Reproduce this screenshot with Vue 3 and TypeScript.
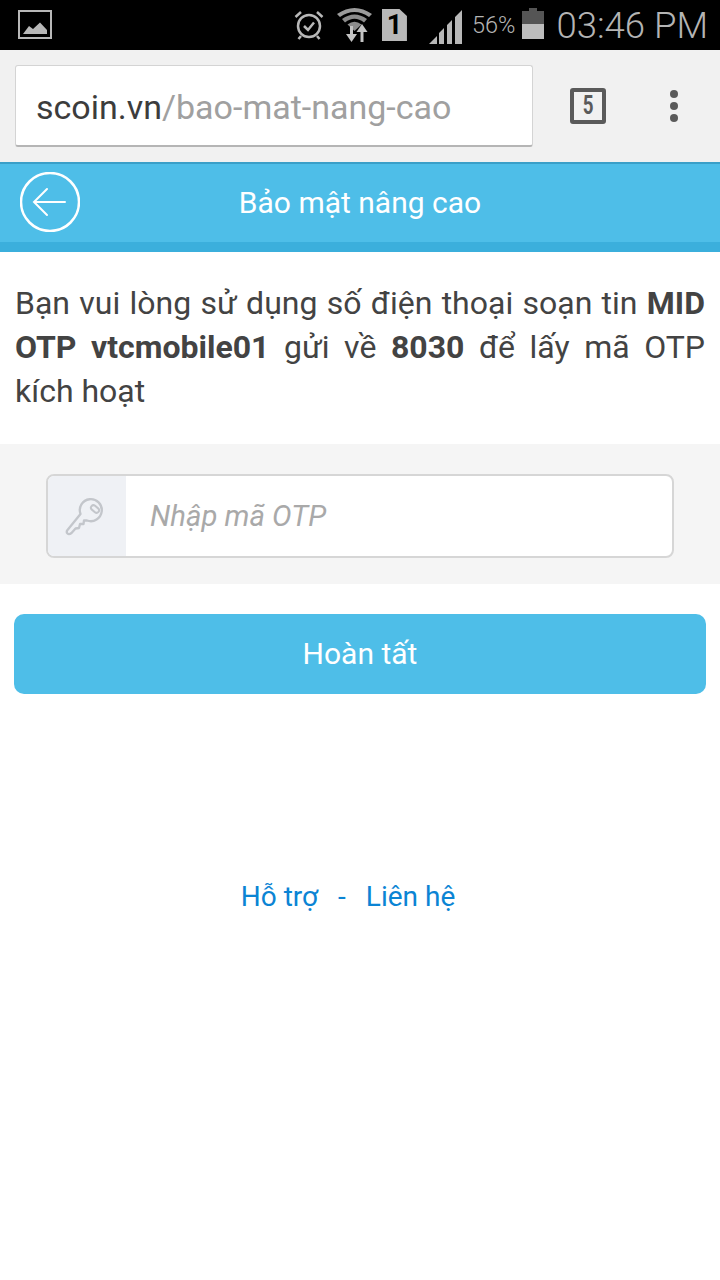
<script setup lang="ts">
import { ref } from 'vue'

const otp = ref('')
</script>

<template>
  <div class="screen">
    <!-- status bar -->
    <div class="status-bar">
      <svg class="pic-icon" width="34" height="29" viewBox="0 0 34 29">
        <rect x="1" y="1" width="32" height="27" fill="none" stroke="#b8b8b8" stroke-width="2" />
        <path d="M5 24 L11 16 L15 19 L22 12.500 L29 20 L29 24 Z" fill="#b8b8b8" />
      </svg>
      <div class="spacer"></div>
      <svg class="alarm" width="30" height="30" viewBox="0 0 30 30">
        <circle cx="15" cy="16" r="11" fill="none" stroke="#b8b8b8" stroke-width="2.500" />
        <path d="M10 16 L14 20 L20 12.500" fill="none" stroke="#b8b8b8" stroke-width="2.500" />
        <path d="M1.500 7 L7 2 M28.500 7 L23 2 M7 26 L4.500 29 M23 26 L25.500 29" stroke="#b8b8b8" stroke-width="2.500" />
      </svg>
      <svg class="wifi" width="36" height="36" viewBox="0 0 36 36">
        <path d="M0 7 Q17.500 -5 35 7 L32 10 Q17.500 0 3 10 Z" fill="#9c9c9c" />
        <path d="M5 12 Q17.500 3 30 12 L27 15.500 Q17.500 8 8 15.500 Z" fill="#8c8c8c" />
        <path d="M10.500 17.500 Q17.500 12 24.500 17.500 L17.500 24 Z" fill="#8c8c8c" />
        <path d="M13 19 H16 V27 H20 L14.500 35 L9 27 H13 Z" fill="#c4c4c4" />
        <path d="M23.500 35 H26.500 V25 H30.500 L25 17 L19.500 25 H23.500 Z" fill="#c4c4c4" />
      </svg>
      <div class="sim">1</div>
      <svg class="signal" width="34" height="34" viewBox="0 0 34 34">
        <path d="M0 34 L8 26 V34 Z M10 34 V23 L15 18 V34 Z M18 34 V15 L23 10 V34 Z M26 34 V7 L33 0 V34 Z" fill="#b8b8b8" />
      </svg>
      <span class="pct">56%</span>
      <div class="battery"><div class="battery-fill"></div></div>
      <span class="clock">03:46 PM</span>
    </div>

    <!-- browser toolbar -->
    <div class="toolbar">
      <div class="url-box">
        <span class="url-host">scoin.vn</span><span class="url-path">/bao-mat-nang-cao</span>
      </div>
      <div class="tabs-count"><span>5</span></div>
      <div class="menu-dots"><i></i><i></i><i></i></div>
    </div>

    <!-- page header -->
    <header class="page-header">
      <a class="back-btn">
        <svg width="60" height="60" viewBox="0 0 60 60">
          <circle cx="30" cy="30" r="29" fill="none" stroke="#fff" stroke-width="2.500" />
          <path d="M14 30 H45 M27 17 L14 30 L27 43" fill="none" stroke="#fff" stroke-width="2" stroke-linecap="round" />
        </svg>
      </a>
      <h1 class="page-title">Bảo mật nâng cao</h1>
    </header>

    <p class="intro">
      Bạn vui lòng sử dụng số điện thoại soạn tin <b>MID OTP vtcmobile01</b> gửi về <b>8030</b> để lấy mã OTP kích hoạt
    </p>

    <div class="otp-section">
      <div class="otp-field">
        <div class="otp-icon">
          <svg width="40" height="40" viewBox="0 0 40 40">
            <path d="M15.500 18 A11 11 0 1 1 22 24.500 L19 24.500 L18.500 28 L15 28 L14 32 L10.500 32.500 L6.500 37 Q4 39 2.500 37.500 Q1 36 2.500 34 Z" fill="none" stroke="#c3c6cb" stroke-width="2.300" stroke-linejoin="round" />
            <rect x="25.500" y="10.500" width="9" height="5" rx="2.500" transform="rotate(40 30 13)" fill="none" stroke="#c3c6cb" stroke-width="2" />
          </svg>
        </div>
        <input v-model="otp" class="otp-input" type="text" placeholder="Nhập mã OTP" />
      </div>
    </div>

    <div class="submit-wrap">
      <button class="submit-btn">Hoàn tất</button>
    </div>

    <div class="links">
      <a>Hỗ trợ</a><span class="sep">-</span><a>Liên hệ</a>
    </div>
  </div>
</template>

<style>
html,
body {
  margin: 0;
  background: #fff;
}
</style>

<style scoped>
.screen {
  width: 720px;
  height: 1280px;
  overflow: hidden;
  background: #fff;
  font-family: Roboto, "Noto Sans", sans-serif;
  color: #434343;
}

.status-bar {
  height: 50px;
  background: #000;
  display: flex;
  align-items: center;
  padding: 0 12px 0 18px;
  box-sizing: border-box;
  color: #b4b4b4;
}

.spacer {
  flex: 1;
}

.pic-icon {
  margin-top: -1px;
}

.wifi {
  margin-left: 13px;
}

.sim {
  width: 25px;
  height: 32px;
  margin-left: 9px;
  background: #b8b8b8;
  color: #000;
  font-size: 27px;
  font-weight: 700;
  line-height: 33px;
  text-align: center;
  clip-path: polygon(0 0, 70% 0, 100% 22%, 100% 100%, 0 100%);
}

.signal {
  margin-left: 22px;
  margin-top: 4px;
}

.pct {
  margin-left: 9px;
  font-size: 23.500px;
  font-weight: 300;
}

.battery {
  position: relative;
  width: 22px;
  height: 28px;
  margin-left: 7px;
  background: #555;
}

.battery::before {
  content: '';
  position: absolute;
  top: -3px;
  left: 7px;
  width: 8px;
  height: 3px;
  background: #555;
}

.battery-fill {
  position: absolute;
  left: 0;
  right: 0;
  bottom: 0;
  height: 15px;
  background: #bdbdbd;
}

.clock {
  margin-left: 12px;
  font-size: 36.500px;
  font-weight: 300;
  white-space: nowrap;
}

.toolbar {
  height: 112px;
  background: #f1f1f1;
  display: flex;
  align-items: center;
  padding-left: 15px;
  box-sizing: border-box;
}

.url-box {
  width: 518px;
  height: 82px;
  box-sizing: border-box;
  background: #fff;
  border: 1px solid #d4d4d4;
  border-bottom: 2px solid #b5b5b5;
  border-radius: 3px;
  padding-left: 20px;
  font-size: 34px;
  line-height: 82px;
  white-space: nowrap;
}

.url-host {
  color: #3c3c3c;
}

.url-path {
  color: #a0a0a0;
}

.tabs-count {
  width: 36px;
  height: 36px;
  margin-left: 37px;
  box-sizing: border-box;
  border: 4px solid #5a5a5a;
  border-radius: 3px;
  color: #5a5a5a;
  font-size: 25px;
  font-weight: 700;
  line-height: 28px;
  text-align: center;
}

.tabs-count span {
  display: inline-block;
  transform: scaleX(0.75);
}

.menu-dots {
  margin-left: 64px;
  display: flex;
  flex-direction: column;
  gap: 4px;
}

.menu-dots i {
  display: block;
  width: 8px;
  height: 8px;
  border-radius: 50%;
  background: #5a5a5a;
}

.page-header {
  height: 90px;
  box-sizing: border-box;
  background: #4ebee8;
  border-top: 2px solid #3a9fc8;
  border-bottom: 10px solid #3bafdc;
  display: flex;
  align-items: center;
  position: relative;
}

.back-btn {
  position: absolute;
  left: 20px;
  top: 8px;
  width: 60px;
  height: 60px;
}

.page-title {
  flex: 1;
  margin: 0 0 2px;
  font-size: 30px;
  font-weight: 400;
  color: #fff;
  text-align: center;
}

.intro {
  margin: 0;
  padding: 29px 15px 0;
  height: 192px;
  box-sizing: border-box;
  font-size: 32px;
  line-height: 44px;
  text-align: justify;
  color: #434343;
}

.otp-section {
  height: 140px;
  background: #f5f5f5;
  padding: 30px 46px;
  box-sizing: border-box;
}

.otp-field {
  height: 84px;
  box-sizing: border-box;
  display: flex;
  background: #fff;
  border: 2px solid #d6d6d6;
  border-radius: 8px;
  overflow: hidden;
}

.otp-icon {
  width: 78px;
  background: #eff1f5;
  display: flex;
  align-items: center;
  justify-content: center;
  padding-right: 4px;
  box-sizing: border-box;
}

.otp-input {
  flex: 1;
  min-width: 0;
  border: none;
  outline: none;
  background: transparent;
  padding: 0 24px;
  font-family: inherit;
  font-size: 29.300px;
  font-style: italic;
  color: #434343;
}

.otp-input::placeholder {
  color: #a9a9a9;
  opacity: 1;
}

.submit-wrap {
  padding: 30px 14px 0;
}

.submit-btn {
  display: block;
  width: 100%;
  height: 80px;
  padding: 0 0 2px;
  border: none;
  border-radius: 10px;
  background: #4ebee8;
  color: #fff;
  font-family: inherit;
  font-size: 30px;
}

.links {
  margin-top: 186px;
  padding-right: 24px;
  display: flex;
  justify-content: center;
  font-size: 28px;
  line-height: 34px;
  color: #0b84d4;
}

.sep {
  margin: 0 20px;
}
</style>
